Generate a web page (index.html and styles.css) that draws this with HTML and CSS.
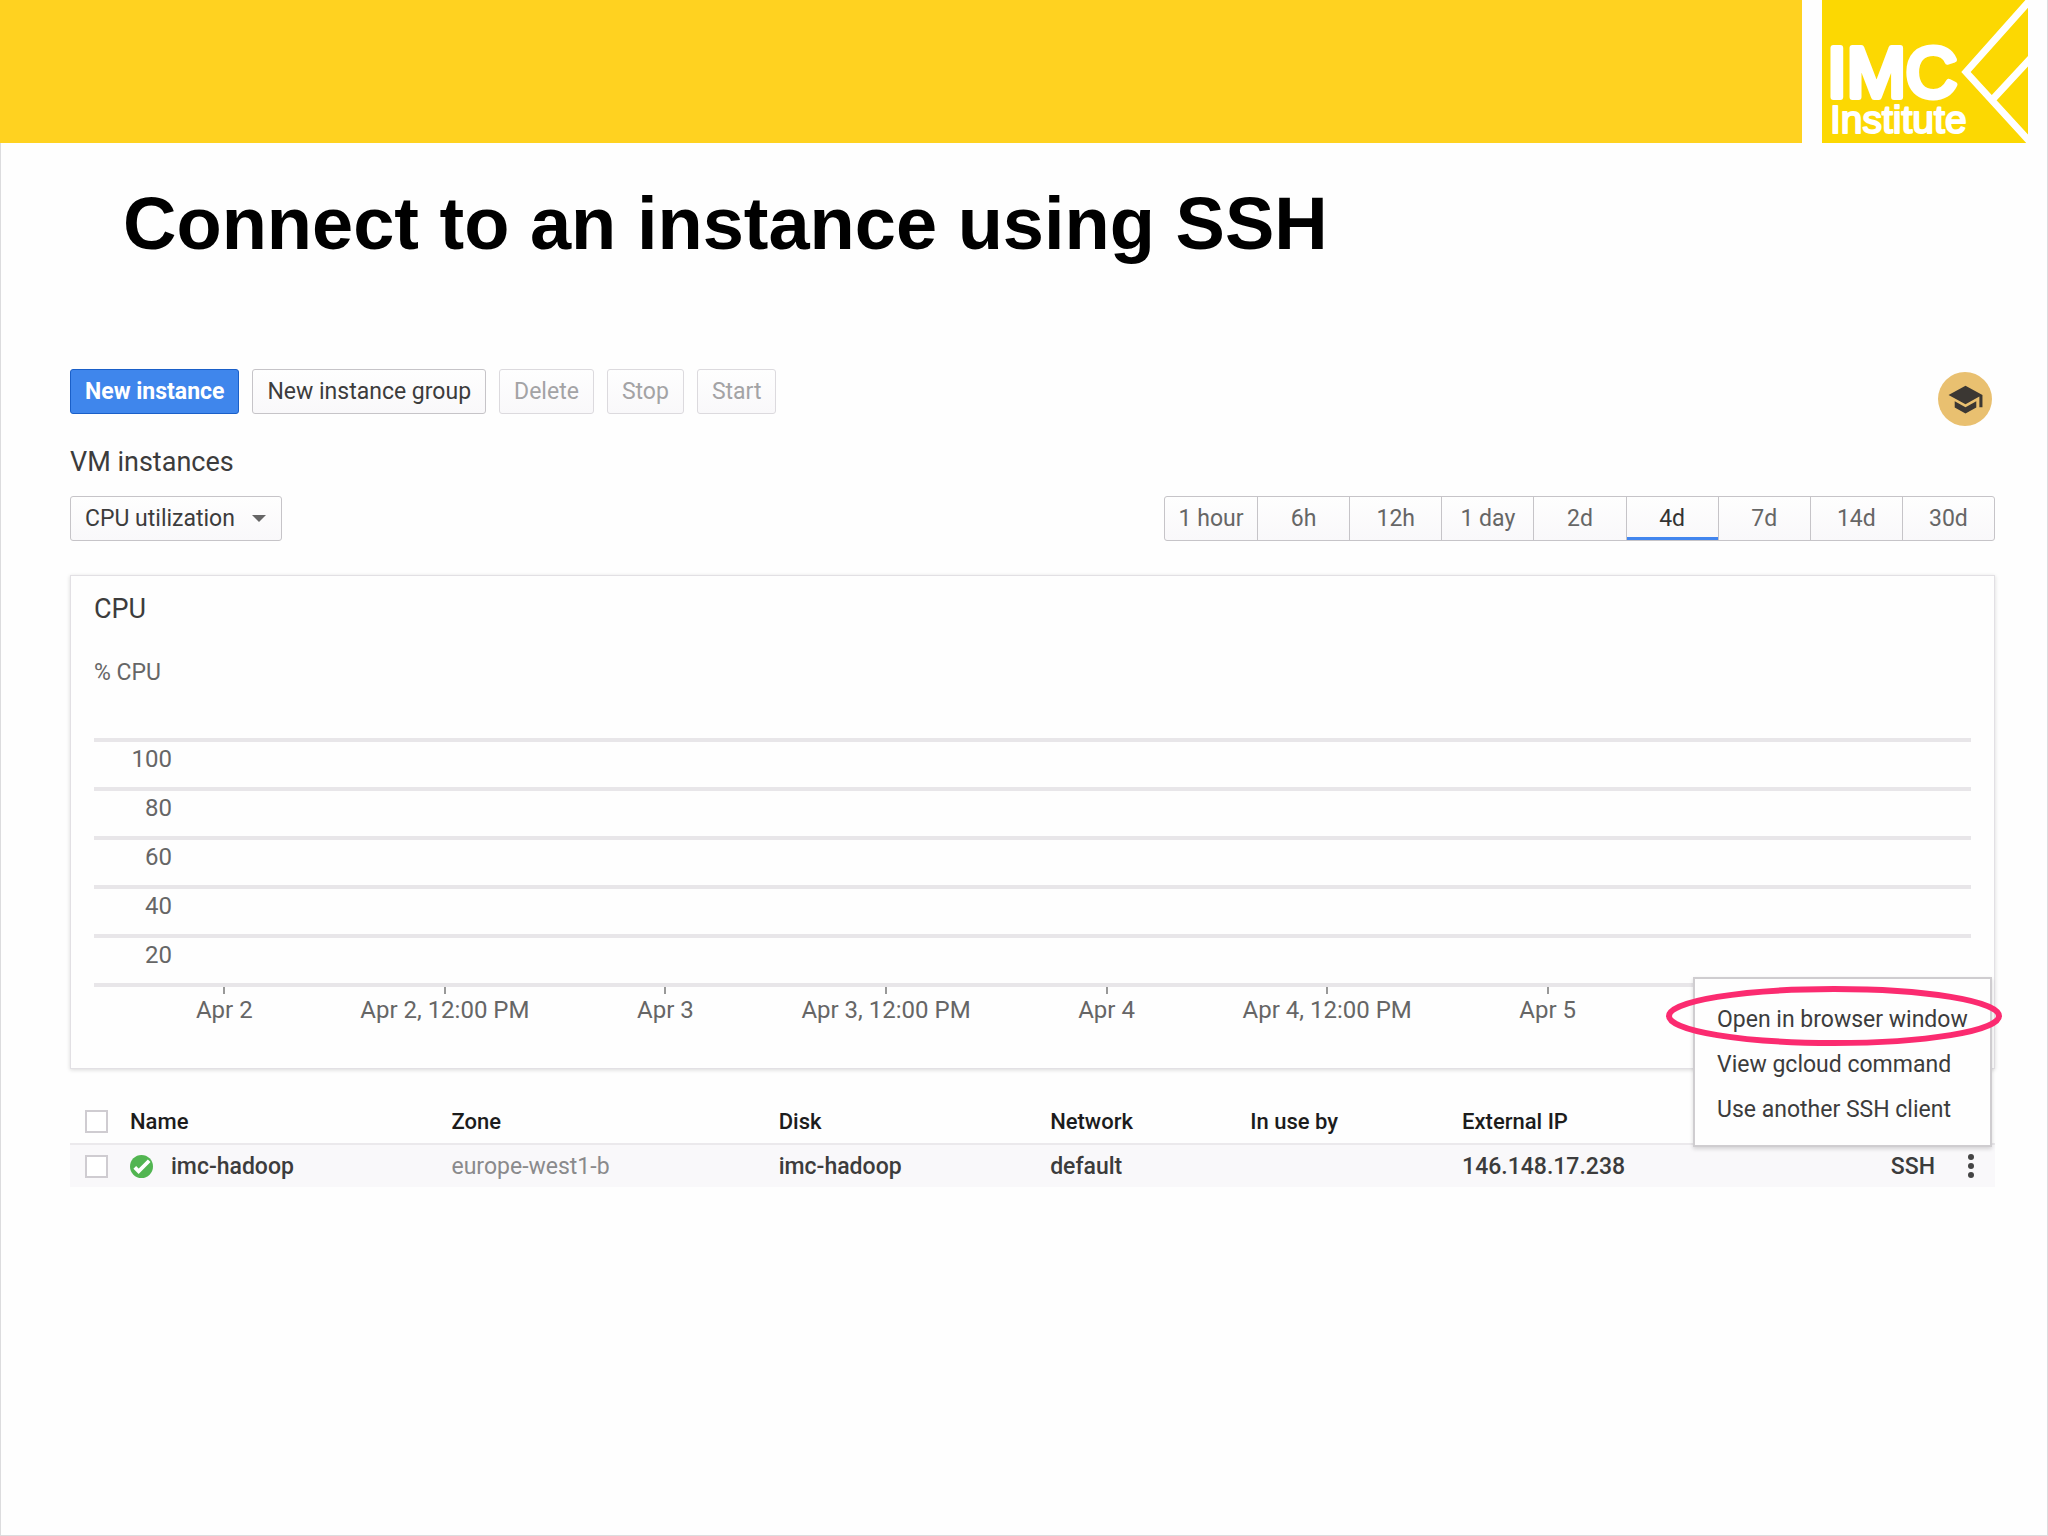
FILE: index.html
```html
<!DOCTYPE html>
<html lang="en">
<head>
    <meta charset="UTF-8">
    <meta name="viewport" content="width=device-width, initial-scale=1.0">
    <title>Connect to an instance using SSH</title>
    <link rel="stylesheet" href="styles.css">
</head>
<body>
    <div class="slide">
        <header class="banner">
            <div class="banner-bar"></div>
            <svg class="logo" viewBox="0 0 206 143" role="img" aria-label="IMC Institute">
                <rect width="206" height="143" fill="#fcd802"/>
                <g class="logo-text">
                    <text class="logo-name" x="5" y="97">IMC</text>
                    <text class="logo-sub" x="8" y="133">Institute</text>
                </g>
                <path d="M209 -1 L144 72 L209 143 M171 99 L209 58" fill="none" stroke="#fff" stroke-width="7"/>
            </svg>
        </header>

        <h1>Connect to an instance using SSH</h1>

        <main class="console">
            <div class="toolbar">
                <button type="button" class="btn btn-primary">New instance</button>
                <button type="button" class="btn">New instance group</button>
                <button type="button" class="btn" disabled>Delete</button>
                <button type="button" class="btn" disabled>Stop</button>
                <button type="button" class="btn" disabled>Start</button>
                <button type="button" class="tutorial" aria-label="Tutorials">
                    <svg viewBox="0 0 24 24" width="37" height="37"><path fill="#3b3733" d="M5 13.2v4L12 21l7-3.800v-4L12 17l-7-3.800zM12 3L1 9l11 6 9-4.900V17h2V9L12 3z"/></svg>
                </button>
            </div>

            <h2>VM instances</h2>

            <div class="filters">
                <div class="metric">
                    <select aria-label="Metric">
                        <option>CPU utilization</option>
                    </select>
                    <svg class="arrow" viewBox="0 0 14 7" width="14" height="7"><path fill="#666" d="M0 0h14L7 7z"/></svg>
                </div>
                <div class="ranges">
                    <button type="button">1 hour</button>
                    <button type="button">6h</button>
                    <button type="button">12h</button>
                    <button type="button">1 day</button>
                    <button type="button">2d</button>
                    <button type="button" class="active">4d</button>
                    <button type="button">7d</button>
                    <button type="button">14d</button>
                    <button type="button">30d</button>
                </div>
            </div>

            <section class="card">
                <h3>CPU</h3>
                <p class="unit">% CPU</p>
                <div class="chart">
                    <div class="grid-row"><span>100</span></div>
                    <div class="grid-row"><span>80</span></div>
                    <div class="grid-row"><span>60</span></div>
                    <div class="grid-row"><span>40</span></div>
                    <div class="grid-row"><span>20</span></div>
                </div>
                <div class="axis">
                    <span>Apr 2</span>
                    <span>Apr 2, 12:00 PM</span>
                    <span>Apr 3</span>
                    <span>Apr 3, 12:00 PM</span>
                    <span>Apr 4</span>
                    <span>Apr 4, 12:00 PM</span>
                    <span>Apr 5</span>
                </div>
            </section>

            <table class="instances">
                <colgroup>
                    <col class="col-check">
                    <col class="col-name">
                    <col class="col-zone">
                    <col class="col-disk">
                    <col class="col-network">
                    <col class="col-use">
                    <col class="col-ip">
                    <col class="col-ssh">
                </colgroup>
                <thead>
                    <tr>
                        <th><input type="checkbox" aria-label="Select all"></th>
                        <th>Name</th>
                        <th>Zone</th>
                        <th>Disk</th>
                        <th>Network</th>
                        <th>In use by</th>
                        <th>External IP</th>
                        <th></th>
                    </tr>
                </thead>
                <tbody>
                    <tr>
                        <td><input type="checkbox" aria-label="Select imc-hadoop"></td>
                        <td>
                            <div class="name">
                                <svg viewBox="0 0 24 24" width="23" height="23"><circle cx="12" cy="12" r="12" fill="#52b551"/><path d="M5 13l4 4L20 6" fill="none" stroke="#fff" stroke-width="4"/></svg>
                                <a href="#imc-hadoop">imc-hadoop</a>
                            </div>
                        </td>
                        <td class="zone">europe-west1-b</td>
                        <td><a href="#disk">imc-hadoop</a></td>
                        <td><a href="#network">default</a></td>
                        <td></td>
                        <td>146.148.17.238</td>
                        <td>
                            <div class="actions">
                                <button type="button" class="ssh">SSH</button>
                                <button type="button" class="more" aria-label="More options">
                                    <svg viewBox="0 0 8 26" width="8" height="26" fill="#444"><circle cx="4" cy="4" r="3"/><circle cx="4" cy="13" r="3"/><circle cx="4" cy="22" r="3"/></svg>
                                </button>
                                <div class="menu">
                                    <a href="#browser">Open in browser window</a>
                                    <a href="#gcloud">View gcloud command</a>
                                    <a href="#client">Use another SSH client</a>
                                    <svg class="highlight" viewBox="0 0 336 60" width="336" height="60"><ellipse cx="168" cy="30" rx="165" ry="27" fill="none" stroke="#fb2b70" stroke-width="6"/></svg>
                                </div>
                            </div>
                        </td>
                    </tr>
                </tbody>
            </table>
        </main>
    </div>
</body>
</html>
```

FILE: styles.css
```css
* {
    box-sizing: border-box;
}

body {
    margin: 0;
    background-color: #fefefe;
    color: #3c3c3c;
    font-family: Roboto, "Liberation Sans", sans-serif;
    font-size: 24px;
}

h1, h2, h3, p {
    margin: 0;
}

a {
    color: inherit;
    text-decoration: none;
}

button, select {
    font: inherit;
    color: inherit;
}

.slide {
    min-height: 100vh;
    border: 1px solid #dcdcde;
    border-top: none;
}

/* banner */
.banner {
    display: flex;
    gap: 20px;
    height: 143px;
    margin-left: -1px;
    padding-right: 19px;
}

.banner-bar {
    flex: 1;
    background-color: #ffd220;
}

.logo {
    width: 206px;
    height: 143px;
}

.logo-text {
    fill: #fff;
    stroke: #fff;
    stroke-linejoin: round;
    font-family: "Liberation Sans", Arial, sans-serif;
}

.logo-name {
    font-size: 71px;
    stroke-width: 6px;
}

.logo-sub {
    font-size: 39px;
    stroke-width: 2px;
}

h1 {
    padding: 37px 122px 0;
    color: #000;
    font-family: "Liberation Sans", Arial, sans-serif;
    font-size: 74px;
    line-height: 88px;
}

.console {
    padding: 101px 52px 0 69px;
}

/* toolbar */
.toolbar {
    display: flex;
    align-items: flex-start;
    gap: 13px;
}

.btn {
    height: 45px;
    padding: 0 14px;
    border: 1px solid #c6c4c8;
    border-radius: 3px;
    background: linear-gradient(#fefefe, #f9f8fa);
    font-size: 23px;
    white-space: nowrap;
}

.btn-primary {
    border-color: #1a5fc8;
    background: #3f86ec;
    color: #fff;
    font-weight: 700;
}

.btn:disabled {
    border-color: #dcdade;
    color: #a3a3a5;
}

.tutorial {
    display: flex;
    align-items: center;
    justify-content: center;
    width: 54px;
    height: 54px;
    margin: 3px 3px 0 auto;
    padding: 0;
    border: none;
    border-radius: 50%;
    background-color: #e9c070;
}

h2 {
    margin-top: 21px;
    font-size: 27px;
    font-weight: 400;
    line-height: 30px;
}

.filters {
    display: flex;
    justify-content: space-between;
    margin-top: 19px;
}

.metric {
    position: relative;
}

.metric select {
    width: 212px;
    height: 45px;
    padding: 0 14px;
    border: 1px solid #c6c4c8;
    border-radius: 3px;
    background: linear-gradient(#fefefe, #f9f8fa);
    font-size: 23px;
    appearance: none;
}

.arrow {
    position: absolute;
    top: 19px;
    right: 16px;
    pointer-events: none;
}

.ranges {
    display: grid;
    grid-template-columns: repeat(9, 1fr);
    width: 831px;
    height: 45px;
    border: 1px solid #c6c4c8;
    border-radius: 3px;
    background: linear-gradient(#fefefe, #f9f8fa);
}

.ranges button {
    padding: 0;
    border: none;
    border-left: 1px solid #c6c4c8;
    background: none;
    color: #666;
    font-size: 23px;
}

.ranges button:first-child {
    border-left: none;
}

.ranges .active {
    color: #333;
    box-shadow: inset 0 -3px #4285ee;
}

/* chart */
.card {
    margin-top: 34px;
    padding: 18px 23px 44px;
    border: 1px solid #e2e0e4;
    box-shadow: 0 1px 4px rgba(0, 0, 0, 0.15);
    color: #666;
}

.card h3 {
    color: #3c3c3c;
    font-size: 27px;
    font-weight: 400;
    line-height: 30px;
}

.unit {
    margin-top: 35px;
    font-size: 23px;
    line-height: 28px;
}

.chart {
    margin-top: 51px;
    border-bottom: 4px solid #e8e6e9;
}

.grid-row {
    height: 49px;
    border-top: 4px solid #e8e6e9;
    line-height: 34px;
}

.grid-row span {
    display: block;
    width: 78px;
    text-align: right;
}

.axis {
    display: grid;
    grid-template-columns: repeat(7, 1fr);
    padding: 0 313px 0 20px;
    line-height: 28px;
    text-align: center;
}

.axis span::before {
    content: "";
    display: block;
    width: 2px;
    height: 7px;
    margin: 0 auto 2px;
    background-color: #999;
}

/* instances table */
.instances {
    width: 100%;
    margin-top: 30px;
    border-collapse: collapse;
    table-layout: fixed;
    font-weight: 500;
}

.instances th, .instances td {
    padding: 0;
    text-align: left;
}

.instances th {
    height: 45px;
    color: #1c1c1c;
    font-size: 22px;
    font-weight: 500;
}

.instances td {
    height: 43px;
    border-top: 2px solid #ebe9ec;
    background-color: #f9f8fa;
    font-size: 23px;
}

.col-check { width: 60px; }
.col-name { width: 16.7%; }
.col-zone { width: 17%; }
.col-disk { width: 14.1%; }
.col-network { width: 10.4%; }
.col-use { width: 11%; }
.col-ip { width: 12%; }

.instances input {
    display: block;
    width: 23px;
    height: 23px;
    margin: 0 0 0 15px;
    border: 2px solid #cfccd1;
    background-color: #fff;
    appearance: none;
}

.instances .zone {
    color: #8a8a8c;
    font-weight: 400;
}

.name {
    display: flex;
    align-items: center;
    gap: 18px;
}

.actions {
    position: relative;
    display: flex;
    align-items: center;
    justify-content: flex-end;
    gap: 32px;
    padding-right: 20px;
}

.actions button {
    padding: 0;
    border: none;
    background: none;
}

.more {
    display: flex;
}

.menu {
    position: absolute;
    right: 3px;
    bottom: 33px;
    width: 299px;
    padding: 18px 0 13px;
    border: 2px solid #cfcdd0;
    background-color: #fefefe;
    box-shadow: 0 2px 4px rgba(0, 0, 0, 0.15);
    font-weight: 400;
}

.menu a {
    display: block;
    padding-left: 22px;
    line-height: 45px;
    white-space: nowrap;
}

.highlight {
    position: absolute;
    top: 7px;
    left: -29px;
    pointer-events: none;
}
```
